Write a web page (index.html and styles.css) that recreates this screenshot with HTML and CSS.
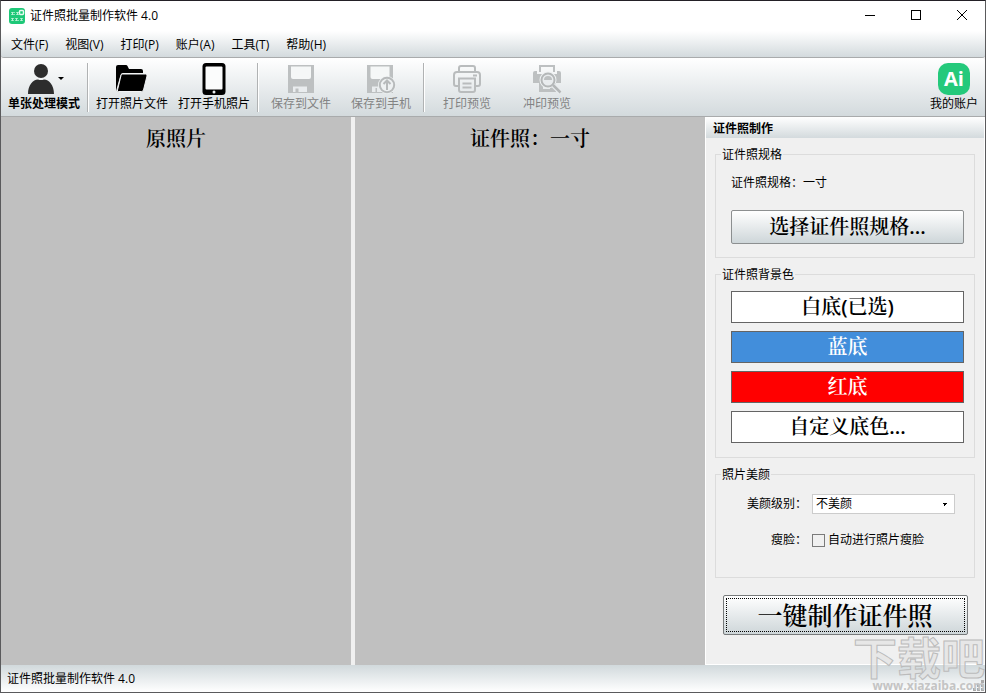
FILE: index.html
```html
<!DOCTYPE html>
<html lang="zh-CN">
<head>
    <meta charset="UTF-8">
    <meta name="viewport" content="width=device-width, initial-scale=1.0">
    <title>证件照批量制作软件 4.0</title>
    <link rel="stylesheet" href="styles.css">
</head>
<body>
    <div class="window">
        <header class="titlebar">
            <svg class="app-icon" width="16" height="16" viewBox="0 0 16 16">
                <rect width="16" height="16" rx="3" fill="#1ec878"/>
                <path d="M2 4.500h4M2 6.500h4M7 4.500h3M7 6.500h3M2 10.500h3M2 12.500h3M6 10.500h3M6 12.500h4M11 10.500h3M11 12.500h3" stroke="#8fe6bb" stroke-width="1" fill="none"/>
                <path d="M3.500 4v3M8.500 4v3M3.500 10v3M7.500 10v3M12.500 10v3" stroke="#b9f2d6" fill="none"/>
                <rect x="10.500" y="2.500" width="4" height="4" rx="1" fill="#1ec878" stroke="#e6faf0" stroke-width="1.500"/>
            </svg>
            <h1 class="title">证件照批量制作软件 4.0</h1>
            <div class="window-buttons">
                <button type="button" aria-label="最小化">
                    <svg width="12" height="12" viewBox="0 0 12 12"><path d="M1 5.500h10" stroke="#000"/></svg>
                </button>
                <button type="button" aria-label="最大化">
                    <svg width="12" height="12" viewBox="0 0 12 12"><rect x="1.500" y="0.500" width="9" height="9" fill="none" stroke="#000"/></svg>
                </button>
                <button type="button" aria-label="关闭">
                    <svg width="12" height="12" viewBox="0 0 12 12"><path d="M1 0l10 10M11 0L1 10" stroke="#000"/></svg>
                </button>
            </div>
        </header>

        <nav class="menubar">
            <a href="#">文件(F)</a>
            <a href="#">视图(V)</a>
            <a href="#">打印(P)</a>
            <a href="#">账户(A)</a>
            <a href="#">工具(T)</a>
            <a href="#">帮助(H)</a>
        </nav>

        <div class="toolbar">
            <button type="button" class="tool tool-active">
                <svg width="72" height="32" viewBox="0 0 72 32">
                    <circle cx="33" cy="8" r="7" fill="#2d2d2d"/>
                    <path d="M20 31c0-9 5-14.500 10-14.500 2 .8 4 .8 6 0 5 0 10 5.500 10 14.500z" fill="#2d2d2d"/>
                    <path d="M50 14h6l-3 3z" fill="#000"/>
                </svg>
                <span>单张处理模式</span>
            </button>
            <div class="separator"></div>
            <button type="button" class="tool">
                <svg width="32" height="32" viewBox="0 0 32 32">
                    <path d="M0 28V4q0-2 2-2h8q1 0 1.500 1l1.500 3h12q2 0 2 2v2H7q-2 0-2.500 2z" fill="#000"/>
                    <path d="M6.500 11h23q2 0 1.500 2l-3.500 14q-.5 1.500-2 1.500h-23q-1.500 0-1-1.500l3.500-14.500q.5-1.500 1.500-1.500z" fill="#000" stroke="#f2f4f5" stroke-width="1"/>
                </svg>
                <span>打开照片文件</span>
            </button>
            <button type="button" class="tool">
                <svg width="32" height="32" viewBox="0 0 32 32">
                    <rect x="4.500" width="23" height="32" rx="3.500" fill="#000"/>
                    <rect x="7.500" y="3.500" width="17" height="23" rx="1" fill="#fbfcfc"/>
                    <circle cx="16" cy="29" r="1.500" fill="#e8ecee"/>
                </svg>
                <span>打开手机照片</span>
            </button>
            <div class="separator"></div>
            <button type="button" class="tool" disabled>
                <svg width="32" height="32" viewBox="0 0 32 32">
                    <path d="M3 2h26v28H3z" fill="#bdc0c1"/>
                    <path d="M6 3.500h20V14q0 2-2 2H8q-2 0-2-2z" fill="#f5f7f7"/>
                    <path d="M8 23.500h14V29H13.500v-3.500h-3V29H8z" fill="#e9ecee"/>
                </svg>
                <span>保存到文件</span>
            </button>
            <button type="button" class="tool" disabled>
                <svg width="32" height="32" viewBox="0 0 32 32">
                    <path d="M2 2h26v28H2z" fill="#bdc0c1"/>
                    <path d="M5.500 3.500h19V12q0 4-2 4H7.500q-2 0-2-2z" fill="#f5f7f7"/>
                    <path d="M7 23.500h9V29h-4v-4h-1.500V29H7z" fill="#e9ecee"/>
                    <circle cx="22" cy="22" r="9" fill="#eef1f2"/>
                    <circle cx="22" cy="22" r="7.200" fill="#eef1f2" stroke="#b7babb" stroke-width="2"/>
                    <path d="M22 27v-9M18.500 21l3.500-3.500 3.500 3.500" fill="none" stroke="#b7babb" stroke-width="2"/>
                </svg>
                <span>保存到手机</span>
            </button>
            <div class="separator"></div>
            <button type="button" class="tool" disabled>
                <svg width="32" height="32" viewBox="0 0 32 32" fill="none" stroke="#b9bcbd" stroke-width="2">
                    <path d="M8 9V5q0-2 2-2h12q2 0 2 2v4"/>
                    <path d="M7 23H5q-2 0-2-2V12q0-3 3-3h20q3 0 3 3v9q0 2-2 2h-2"/>
                    <path d="M8 15.500h16V27q0 2-2 2H10q-2 0-2-2zM11.500 20.500h9M11.500 24.500h9M22 12.500h4"/>
                </svg>
                <span>打印预览</span>
            </button>
            <button type="button" class="tool" disabled>
                <svg width="32" height="32" viewBox="0 0 32 32">
                    <path d="M8 9V2h16v7h-2V4H10v5z" fill="#bdc0c1"/>
                    <path d="M4 8h2v3h20V8h2q2 0 2 2v10h-5v9H8v-9H2V10q0-2 2-2z" fill="#bdc0c1"/>
                    <path d="M12 25h7" stroke="#e9ecee" stroke-width="2"/>
                    <path d="M22.500 22.500l7 7" stroke="#e9ecee" stroke-width="5"/>
                    <circle cx="17" cy="17" r="8.500" fill="#eef1f2"/>
                    <circle cx="17" cy="17" r="6.500" fill="#e9ecee" stroke="#b4b7b8" stroke-width="2"/>
                    <path d="M13 17q0-4 4-4 4 0 4 4z" fill="#bdc0c1"/>
                    <path d="M22 22l7.500 7.500" stroke="#b4b7b8" stroke-width="2.500"/>
                </svg>
                <span>冲印预览</span>
            </button>
            <button type="button" class="tool tool-account">
                <span class="account-icon" aria-hidden="true">Ai</span>
                <span>我的账户</span>
            </button>
        </div>

        <main class="workspace">
            <section class="photo-pane">
                <h2>原照片</h2>
            </section>
            <section class="photo-pane">
                <h2>证件照：一寸</h2>
            </section>

            <aside class="side">
                <h2 class="side-title">证件照制作</h2>
                <div class="side-body">
                    <fieldset class="group group-spec">
                        <legend>证件照规格</legend>
                        <p>证件照规格：一寸</p>
                        <button type="button" class="btn btn-spec">选择证件照规格...</button>
                    </fieldset>

                    <fieldset class="group group-colors">
                        <legend>证件照背景色</legend>
                        <button type="button" class="btn btn-color">白底(已选)</button>
                        <button type="button" class="btn btn-color btn-blue">蓝底</button>
                        <button type="button" class="btn btn-color btn-red">红底</button>
                        <button type="button" class="btn btn-color">自定义底色...</button>
                    </fieldset>

                    <fieldset class="group group-beauty">
                        <legend>照片美颜</legend>
                        <label class="field-label" for="level">美颜级别：</label>
                        <select id="level">
                            <option>不美颜</option>
                        </select>
                        <span class="field-label">瘦脸：</span>
                        <label class="check" for="slim">
                            <input type="checkbox" id="slim">自动进行照片瘦脸
                        </label>
                    </fieldset>

                    <button type="button" class="btn btn-make">一键制作证件照</button>
                </div>
            </aside>
        </main>

        <footer class="statusbar">
            <span>证件照批量制作软件 4.0</span>
            <svg width="12" height="12" viewBox="0 0 12 12">
                <path d="M8 0h3v3H8zM4 4h3v3H4zM8 4h3v3H8zM0 8h3v3H0zM4 8h3v3H4zM8 8h3v3H8z" fill="#aaa"/>
            </svg>
        </footer>

        <div class="watermark" aria-hidden="true">
            <span class="mark-name">下载吧</span>
            <span class="mark-url">www.xiazaiba.com</span>
        </div>
    </div>
</body>
</html>
```
FILE: styles.css
```css
* {
    box-sizing: border-box;
}
body {
    margin: 0;
    font-family: "Open Sans", "Noto Sans CJK SC", sans-serif;
    font-size: 12px;
    line-height: 16px;
    color: #000;
}
h1, h2, p {
    margin: 0;
    font-size: 12px;
    font-weight: normal;
}
button, select, input {
    font: inherit;
    color: inherit;
    margin: 0;
}
.window {
    position: relative;
    display: flex;
    flex-direction: column;
    height: 100vh;
    border: 1px solid #5a5a5c;
    border-top-color: #232026;
    background: #f0f0f0;
    overflow: hidden;
}

/* title bar */
.titlebar {
    display: flex;
    align-items: center;
    height: 30px;
    padding-left: 8px;
    background: #fff;
}
.title {
    flex: 1;
    margin-left: 5px;
}
.window-buttons {
    display: flex;
}
.window-buttons button {
    display: flex;
    align-items: center;
    justify-content: center;
    width: 46px;
    height: 30px;
    padding: 0;
    border: 0;
    background: none;
}

/* menu and toolbar */
.menubar {
    display: flex;
    align-items: center;
    gap: 17px;
    height: 27px;
    padding: 2px 10px 0;
    background: linear-gradient(#fff, #d3dadd);
    border-bottom: 1px solid #a9abac;
    border-radius: 0 0 3px 3px;
}
.menubar a {
    color: #000;
    text-decoration: none;
}
.toolbar {
    display: flex;
    height: 59px;
    padding: 5px 4px 4px 2px;
    background: linear-gradient(#fff, #d3dadd);
    border-bottom: 1px solid #a9abac;
    border-radius: 3px 3px 0 0;
}
.tool {
    display: flex;
    flex-direction: column;
    align-items: center;
    gap: 1px;
    min-width: 80px;
    padding: 0 5px;
    border: 0;
    background: none;
    white-space: nowrap;
}
.tool:disabled {
    color: #838383;
}
.tool-active {
    font-weight: bold;
}
.tool-account {
    min-width: 54px;
    margin-left: auto;
    padding: 0 3px;
}
.account-icon {
    width: 32px;
    height: 32px;
    border-radius: 10px;
    background: #24c97b;
    color: #fff;
    font-size: 20px;
    font-weight: bold;
    line-height: 32px;
    text-align: center;
}
.separator {
    width: 2px;
    margin: 0 2px;
    border-left: 1px solid #b0b2b3;
    border-right: 1px solid #fff;
}

/* work area */
.workspace {
    flex: 1;
    display: flex;
    min-height: 0;
}
.photo-pane {
    flex: 1;
    background: #c0c0c0;
}
.photo-pane + .photo-pane {
    border-left: 4px solid #f0f0f0;
    flex-basis: 4px;
}
.photo-pane h2 {
    padding-top: 8px;
    font-family: "Noto Serif CJK SC", "Noto Sans CJK SC", serif;
    font-size: 20px;
    font-weight: 600;
    line-height: 26px;
    text-align: center;
}
.side {
    flex: 0 0 280px;
    border: 1px solid #fff;
    border-top: 0;
}
.side-title {
    height: 21px;
    padding-left: 7px;
    background: linear-gradient(#fff, #d3dadd);
    font-weight: bold;
    line-height: 23px;
}
.side-body {
    display: flex;
    flex-direction: column;
    padding: 8px 9px;
}
.group {
    min-width: 0;
    margin: 0 0 8px;
    padding: 0 10px 0 15px;
    border: 1px solid #dcdcdc;
}
.group legend {
    height: 16px;
    margin-left: -10px;
    padding: 0 1px;
    line-height: 18px;
}
.group p {
    margin: 13px 0 19px;
}
.btn {
    display: block;
    width: 100%;
    padding: 0;
    border: 1px solid #646464;
    background: #fff;
    font-family: "Open Sans", "Noto Serif CJK SC", "Noto Sans CJK SC", serif;
    font-size: 20px;
    font-weight: 600;
    text-align: center;
}
.btn-spec {
    height: 34px;
    margin-bottom: 13px;
    border-color: #8c8f90;
    border-radius: 2px;
    background: linear-gradient(#fff, #ced6d9);
}
.btn-color {
    height: 32px;
    margin-bottom: 8px;
}
.group-colors {
    padding-top: 9px;
    padding-bottom: 6px;
}
.btn-blue {
    background: #428edb;
    color: #fff;
}
.btn-red {
    background: #f00;
    color: #fff;
}
.group-beauty {
    display: grid;
    grid-template-columns: 76px 1fr;
    grid-template-rows: 20px 20px;
    column-gap: 5px;
    row-gap: 16px;
    align-items: center;
    padding: 12px 19px 27px 15px;
}
.field-label {
    text-align: right;
}
.group-beauty select {
    appearance: none;
    width: 100%;
    height: 20px;
    padding: 0 3px;
    border: 1px solid #ccc;
    border-radius: 0;
    background: linear-gradient(45deg, transparent 50%, #000 50%) no-repeat right 9px top 8px / 3px 3px,
        linear-gradient(-45deg, transparent 50%, #000 50%) no-repeat right 6px top 8px / 3px 3px,
        #fff;
}
.check {
    display: flex;
    align-items: center;
    gap: 3px;
    white-space: nowrap;
}
.check input {
    appearance: none;
    width: 13px;
    height: 13px;
    border: 1px solid #7a7a7a;
}
.btn-make {
    align-self: center;
    width: 245px;
    height: 40px;
    margin-top: 9px;
    border: 1px solid #777a7b;
    border-radius: 2px;
    background: linear-gradient(#fff, #ced6d9);
    outline: 1px dotted #000;
    outline-offset: -4px;
    font-size: 25px;
}

.statusbar {
    display: flex;
    justify-content: space-between;
    align-items: flex-end;
    height: 27px;
    padding-left: 6px;
    background: linear-gradient(#d1d9dc, #fff);
    line-height: 27px;
}

/* site mark over the lower right corner */
.watermark {
    position: absolute;
    right: 0;
    bottom: 0;
    display: flex;
    flex-direction: column;
    align-items: flex-end;
    color: rgba(225, 225, 225, 0.6);
    font-weight: bold;
    pointer-events: none;
}
.mark-name {
    font-size: 44px;
    line-height: 44px;
    -webkit-text-stroke: 1px #bbb;
}
.mark-url {
    color: #c4c4c4;
    font-size: 12px;
    line-height: 12px;
}
```
